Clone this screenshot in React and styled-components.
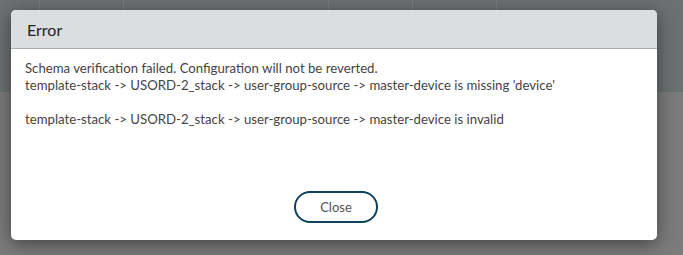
import React from "react";
import styled, { createGlobalStyle } from "styled-components";

const GlobalStyle = createGlobalStyle`
  html, body {
    margin: 0;
    padding: 0;
    background: #7a7a7a;
    font-family: Lato, "Open Sans", sans-serif;
  }
`;

const Page = styled.div`
  position: relative;
  width: 683px;
  height: 255px;
  overflow: hidden;
  display: flex;
  flex-direction: column;
`;

const TopBand = styled.div`
  height: 92px;
  background: #6c7070;
  display: grid;
  grid-template-columns: 40px 84px 205px 84px 84px 1fr;
`;

const BandCell = styled.div`
  border-right: ${({ last }) => (last ? "none" : "1px solid #7a7e7e")};
`;

const Lower = styled.div`
  flex: 1;
  background: #7b7b7b;
`;

const Dialog = styled.div`
  position: absolute;
  left: 11px;
  top: 10px;
  width: 646px;
  height: 230px;
  background: #fff;
  border-radius: 5px;
  box-shadow: 0 4px 18px rgba(0, 0, 0, 0.45);
  display: flex;
  flex-direction: column;
  overflow: hidden;
`;

const Header = styled.div`
  height: 38px;
  background: #dcdddf;
  border-bottom: 1px solid #a9aeb1;
  display: flex;
  align-items: center;
  padding-left: 16px;
  font-size: 16px;
  color: #222;
  font-weight: 400;
`;

const Body = styled.div`
  flex: 1;
  padding: 11px 14px 0;
  font-size: 13.2px;
  line-height: 17px;
  color: #444;
`;

const Line = styled.div`
  min-height: 17px;
`;

const Footer = styled.div`
  display: flex;
  justify-content: center;
  padding: 0 0 17px 4px;
`;

const CloseButton = styled.button`
  width: 84px;
  height: 32px;
  border: 2px solid #0d4459;
  border-radius: 16px;
  background: #fff;
  color: #555;
  font-family: Lato, sans-serif;
  font-size: 13px;
  cursor: pointer;
`;

export default function App() {
  const lines = [
    "Schema verification failed. Configuration will not be reverted.",
    "template-stack -> USORD-2_stack -> user-group-source -> master-device is missing 'device'",
    "",
    "template-stack -> USORD-2_stack -> user-group-source -> master-device is invalid",
  ];
  return (
    <>
      <GlobalStyle />
      <Page>
        <TopBand>
          {[0, 1, 2, 3, 4, 5].map((i) => (
            <BandCell key={i} last={i === 5} />
          ))}
        </TopBand>
        <Lower />
        <Dialog>
          <Header>Error</Header>
          <Body>
            {lines.map((l, i) => (
              <Line key={i}>{l}</Line>
            ))}
          </Body>
          <Footer>
            <CloseButton>Close</CloseButton>
          </Footer>
        </Dialog>
      </Page>
    </>
  );
}
